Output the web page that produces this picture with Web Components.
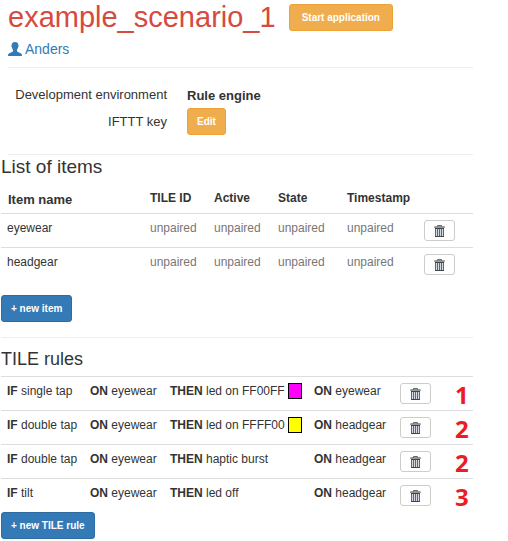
<!DOCTYPE html>
<html lang="en">
<head>
<meta charset="utf-8">
<title>example_scenario_1</title>
<style>
  body { margin: 0; background: #fff; color: #333; font: 12px/17px "Liberation Sans", Arial, sans-serif; }
</style>
</head>
<body>
<scenario-page></scenario-page>
<script>
const define = (name, html, setup) => {
  const template = document.createElement('template');
  template.innerHTML = html;
  customElements.define(name, class extends HTMLElement {
    connectedCallback() {
      if (this.shadowRoot) return;
      const root = this.attachShadow({ mode: 'open' });
      root.append(template.content.cloneNode(true));
      if (setup) setup(this, root);
    }
  });
};

define('action-button', `
  <style>
    :host { display: inline-block; --fill: #f0ad4e; --edge: #eea236; --pad: 12px; }
    :host([kind="primary"]) { --fill: #337ab7; --edge: #2e6da4; --pad: 9px; }
    :host([kind="compact"]) { --pad: 9px; }
    button { display: block; box-sizing: border-box; height: 27px; padding: 0 var(--pad); border: 1px solid var(--edge);
      border-radius: 3px; background: var(--fill); color: #fff; font: bold 10px/15px "Liberation Sans", Arial, sans-serif; cursor: pointer; }
  </style>
  <button type="button"><slot></slot></button>`);

define('trash-button', `
  <style>
    :host { display: block; width: 31px; }
    button { display: flex; align-items: center; justify-content: center; box-sizing: border-box; width: 100%; height: 21px;
      padding: 0; border: 1px solid #ccc; border-radius: 3px; background: #fff; cursor: pointer; }
    svg { display: block; }
  </style>
  <button type="button" aria-label="Delete">
    <svg width="11" height="13" viewBox="0 0 11 13" aria-hidden="true">
      <path d="M3.5 2.5V1.5H7.5V2.5" fill="none" stroke="#666"/>
      <path d="M0 3.5Q0 2.5 1 2.5H10Q11 2.5 11 3.5Z" fill="#333"/>
      <path d="M1 4H10V12.5H1Z" fill="#d3dae2"/>
      <path d="M1.5 4V12.5M3.5 5V12M5.5 5V12M7.5 5V12M9.5 4V12.5" stroke="#666" fill="none"/>
      <path d="M1 4.5H10M1 12.5H10" stroke="#444" fill="none"/>
    </svg>
  </button>`);

define('colour-swatch', `
  <style>
    :host { display: block; box-sizing: border-box; width: 14px; height: 16px; border: 1px solid #000; }
  </style>`, (host) => { host.style.background = host.getAttribute('value'); });

define('scenario-header', `
  <style>
    :host { display: block; padding-left: 8px; }
    .title { display: flex; align-items: center; gap: 13px; height: 35px; }
    h1 { margin: 0; color: #d64a40; font-size: 29px; line-height: 35px; font-weight: normal; }
    a { display: inline-flex; align-items: center; gap: 3px; margin-top: 4px; color: #337ab7; font-size: 14px; line-height: 20px; text-decoration: none; }
    svg { display: block; }
    hr { margin: 6px 0 0; border: 0; border-top: 1px solid #eee; }
  </style>
  <div class="title"><h1><slot></slot></h1><action-button>Start application</action-button></div>
  <a href="#anders">
    <svg width="14" height="14" viewBox="0 0 14 14" fill="#337ab7" aria-hidden="true">
      <path d="M7 0C4.7 0 3.4 1.4 3.6 3.4C3.2 3.6 3.4 4.9 3.9 5.2C4.1 6.4 4.6 7.1 5 7.7V9.2C4.4 10.3 1.2 10.6 .4 12Q0 12.7 0 14H14Q14 12.7 13.6 12C12.8 10.6 9.6 10.3 9 9.2V7.7C9.4 7.1 9.9 6.4 10.1 5.2C10.6 4.9 10.8 3.6 10.4 3.4C10.6 1.4 9.3 0 7 0Z"/>
    </svg><span>Anders</span>
  </a>
  <hr>`);

define('scenario-settings', `
  <style>
    :host { display: block; padding-left: 8px; }
    dl { display: grid; grid-template-columns: 159px 1fr; column-gap: 20px; align-items: center; margin: 0; padding: 14px 0 19px; font-size: 13px; }
    dt { text-align: right; line-height: 26px; }
    dd { margin: 0; font-weight: bold; }
    action-button { display: block; }
    hr { margin: 0; border: 0; border-top: 1px solid #eee; }
  </style>
  <dl>
    <dt>Development environment</dt><dd>Rule engine</dd>
    <dt>IFTTT key</dt><dd><action-button kind="compact">Edit</action-button></dd>
  </dl>
  <hr>`);

const tableStyle = `
  h2 { margin: 0; font-weight: normal; }
  table { width: 100%; border-collapse: separate; border-spacing: 0; table-layout: fixed; }
  th, td { padding: 6px; border-top: 1px solid #ddd; text-align: left; vertical-align: top; white-space: nowrap; }
  td { height: 21px; }`;

define('item-list', `
  <style>
    ${tableStyle}
    :host { display: block; padding-left: 1px; }
    h2 { font-size: 19px; line-height: 24px; }
    thead th { border-top: 0; padding: 11px 6px 6px; line-height: 17px; }
    thead th:first-child { padding: 12px 7px 5px; font-size: 13px; }
    td:not(:first-child) { color: #777; }
    .add { display: block; margin: 14px 0 15px; }
    hr { margin: 0; border: 0; border-top: 1px solid #eee; }
  </style>
  <h2>List of items</h2>
  <table>
    <colgroup><col style="width:143px"><col style="width:64px"><col style="width:64px"><col style="width:69px"><col style="width:77px"><col></colgroup>
    <thead><tr><th>Item name</th><th>TILE ID</th><th>Active</th><th>State</th><th>Timestamp</th><th></th></tr></thead>
    <tbody></tbody>
  </table>
  <action-button class="add" kind="primary">+ new item</action-button>
  <hr>`, (host, root) => {
  root.querySelector('tbody').innerHTML = ['eyewear', 'headgear'].map(name =>
    `<tr><td>${name}</td>${'<td>unpaired</td>'.repeat(4)}<td><trash-button></trash-button></td></tr>`).join('');
});

define('rule-list', `
  <style>
    ${tableStyle}
    :host { display: block; padding: 8px 0 0 1px; }
    h2 { font-size: 18px; line-height: 26px; padding-bottom: 4px; }
    .action { display: flex; align-items: flex-start; gap: 3px; }
    .rank { padding: 8px 0 0 10px; height: 25px; color: #ed1c24; font: bold 24px/20px "Open Sans", "Noto Sans", sans-serif; }
  </style>
  <h2>TILE rules</h2>
  <table>
    <colgroup><col style="width:83px"><col style="width:80px"><col style="width:144px"><col style="width:86px"><col style="width:51px"><col></colgroup>
    <tbody></tbody>
  </table>
  <action-button kind="primary">+ new TILE rule</action-button>`, (host, root) => {
  const rules = [
    ['single tap', 'led on FF00FF', '#ff00ff', 'eyewear', 1],
    ['double tap', 'led on FFFF00', '#ffff00', 'headgear', 2],
    ['double tap', 'haptic burst', '', 'headgear', 2],
    ['tilt', 'led off', '', 'headgear', 3]
  ];
  root.querySelector('tbody').innerHTML = rules.map(([trigger, action, colour, target, rank]) => `
    <tr><td><b>IF</b> ${trigger}</td><td><b>ON</b> eyewear</td>
    <td><div class="action"><span><b>THEN</b> ${action}</span>${colour ? `<colour-swatch value="${colour}"></colour-swatch>` : ''}</div></td>
    <td><b>ON</b> ${target}</td><td><trash-button></trash-button></td><td class="rank">${rank}</td></tr>`).join('');
});

define('scenario-page', `
  <style>
    :host { display: block; padding-right: 35px; }
  </style>
  <scenario-header>example_scenario_1</scenario-header>
  <scenario-settings></scenario-settings>
  <item-list></item-list>
  <rule-list></rule-list>`);
</script>
</body>
</html>
